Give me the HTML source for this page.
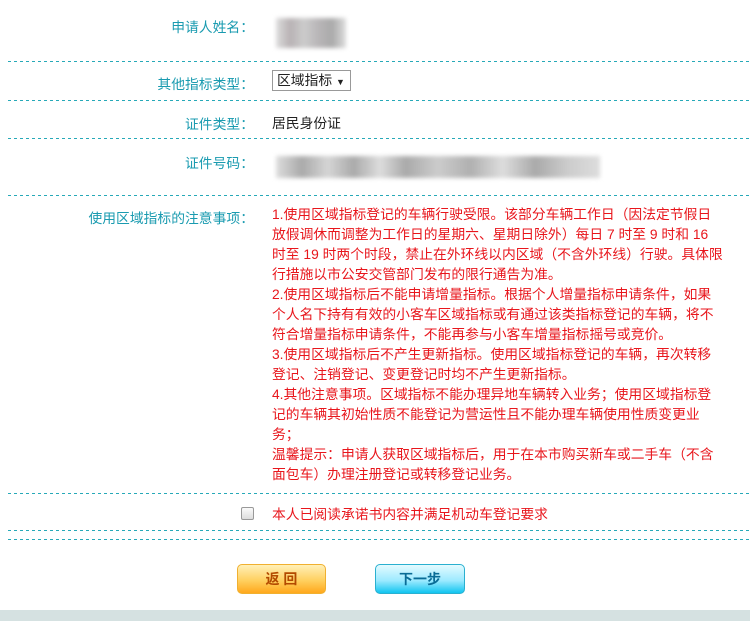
<!DOCTYPE html>
<html><head><meta charset="utf-8"><style>
body{margin:0;width:750px;height:621px;background:#fff;position:relative;overflow:hidden;font-family:"Liberation Sans","Microsoft YaHei","Noto Sans CJK SC",sans-serif;font-size:13px}
.a{position:absolute}
.lbl{position:absolute;right:496px;color:#1a9bb0;white-space:nowrap;font-size:13.8px}
.hr{position:absolute;left:8px;right:0;height:1px;background:repeating-linear-gradient(90deg,#27a9b8 0 3px,transparent 3px 6px)}
.red{color:#e8161c}
.blur{position:absolute;filter:blur(2px)}
</style></head><body>
<div class="lbl" style="top:16px">申请人姓名：</div>
<div class="blur" style="left:276px;top:18px;width:70px;height:30px;background:linear-gradient(90deg,#ddd 0,#b8b2b4 20%,#ccc 40%,#b9b6b8 60%,#aaa 80%,#ddd 100%)"></div>
<div class="hr" style="top:61px"></div>
<div class="lbl" style="top:73px">其他指标类型：</div>
<div class="a" style="left:272px;top:70px;border:1px solid #999;background:#fff;color:#222;line-height:19px;padding-left:4px;box-sizing:border-box;width:79px;height:21px;font-size:13.8px">区域指标 <span style="font-size:9px">▼</span></div>
<div class="hr" style="top:100px"></div>
<div class="lbl" style="top:113px">证件类型：</div>
<div class="a" style="left:272px;top:112px;color:#222;font-size:13.8px">居民身份证</div>
<div class="hr" style="top:138px"></div>
<div class="lbl" style="top:152px">证件号码：</div>
<div class="blur" style="left:276px;top:156px;width:324px;height:22px;background:linear-gradient(90deg,#ddd,#aaa 8%,#d5d5d5 16%,#aaa 24%,#ddd 32%,#aaa 40%,#ccc 50%,#b0b0b0 60%,#ddd 70%,#aaa 80%,#ccc 90%,#ddd)"></div>
<div class="hr" style="top:195px"></div>
<div class="lbl" style="top:207px">使用区域指标的注意事项：</div>
<div class="a red" style="left:272px;top:205px;line-height:20px;font-size:13.8px;white-space:nowrap">
1.使用区域指标登记的车辆行驶受限。该部分车辆工作日（因法定节假日<br>
放假调休而调整为工作日的星期六、星期日除外）每日 7 时至 9 时和 16<br>
时至 19 时两个时段，禁止在外环线以内区域（不含外环线）行驶。具体限<br>
行措施以市公安交管部门发布的限行通告为准。<br>
2.使用区域指标后不能申请增量指标。根据个人增量指标申请条件，如果<br>
个人名下持有有效的小客车区域指标或有通过该类指标登记的车辆，将不<br>
符合增量指标申请条件，不能再参与小客车增量指标摇号或竞价。<br>
3.使用区域指标后不产生更新指标。使用区域指标登记的车辆，再次转移<br>
登记、注销登记、变更登记时均不产生更新指标。<br>
4.其他注意事项。区域指标不能办理异地车辆转入业务；使用区域指标登<br>
记的车辆其初始性质不能登记为营运性且不能办理车辆使用性质变更业<br>
务；<br>
温馨提示：申请人获取区域指标后，用于在本市购买新车或二手车（不含<br>
面包车）办理注册登记或转移登记业务。</div>
<div class="hr" style="top:493px"></div>
<div class="a" style="left:241px;top:507px;width:11px;height:11px;border:1px solid #999;border-radius:2px;background:linear-gradient(#fafafa,#ddd)"></div>
<div class="a red" style="left:272px;top:503px;font-size:13.8px">本人已阅读承诺书内容并满足机动车登记要求</div>
<div class="hr" style="top:530px"></div>
<div class="hr" style="top:539px"></div>
<div class="a" style="left:237px;top:564px;width:89px;height:30px;border:1px solid #f0b030;border-radius:5px;background:linear-gradient(#fff0b8,#ffd060 55%,#ffa81c);color:#b34a00;font-weight:bold;font-size:14px;text-align:center;line-height:28px;box-sizing:border-box">返 回</div>
<div class="a" style="left:375px;top:564px;width:90px;height:30px;border:1px solid #2ab0d0;border-radius:5px;background:linear-gradient(#e4fbff,#9eeaff 55%,#10c4f0);color:#0a6c96;font-weight:bold;font-size:14px;text-align:center;line-height:28px;box-sizing:border-box">下一步</div>
<div class="a" style="left:0;top:610px;width:750px;height:11px;background:#d5e1e1"></div>
</body></html>
